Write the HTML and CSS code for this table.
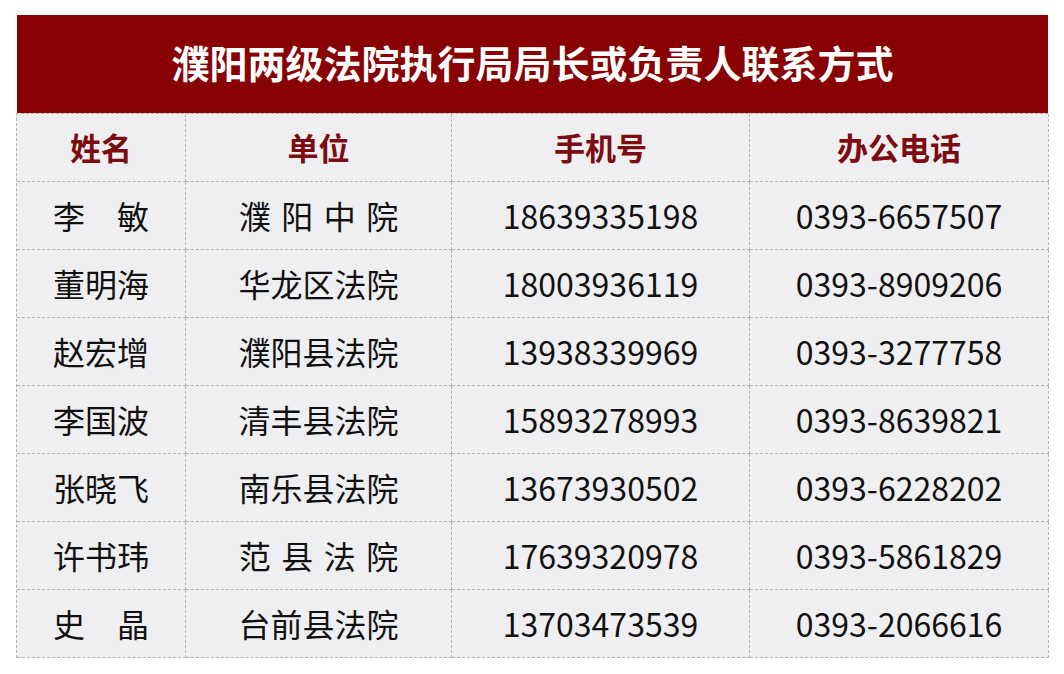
FILE: index.html
```html
<!DOCTYPE html>
<html lang="zh-CN">
<head>
<meta charset="utf-8">
<title>濮阳两级法院执行局局长或负责人联系方式</title>
<link rel="stylesheet" href="styles.css">
</head>
<body>
<div class="sheet">
  <div class="title">濮阳两级法院执行局局长或负责人联系方式</div>
  <div class="grid">
    <div class="cell head">姓名</div>
    <div class="cell head">单位</div>
    <div class="cell head">手机号</div>
    <div class="cell head">办公电话</div>

    <div class="cell">李　敏</div>
    <div class="cell"><span class="spread">濮阳中院</span></div>
    <div class="cell">18639335198</div>
    <div class="cell">0393-6657507</div>

    <div class="cell">董明海</div>
    <div class="cell">华龙区法院</div>
    <div class="cell">18003936119</div>
    <div class="cell">0393-8909206</div>

    <div class="cell">赵宏增</div>
    <div class="cell">濮阳县法院</div>
    <div class="cell">13938339969</div>
    <div class="cell">0393-3277758</div>

    <div class="cell">李国波</div>
    <div class="cell">清丰县法院</div>
    <div class="cell">15893278993</div>
    <div class="cell">0393-8639821</div>

    <div class="cell">张晓飞</div>
    <div class="cell">南乐县法院</div>
    <div class="cell">13673930502</div>
    <div class="cell">0393-6228202</div>

    <div class="cell">许书玮</div>
    <div class="cell"><span class="spread">范县法院</span></div>
    <div class="cell">17639320978</div>
    <div class="cell">0393-5861829</div>

    <div class="cell">史　晶</div>
    <div class="cell">台前县法院</div>
    <div class="cell">13703473539</div>
    <div class="cell">0393-2066616</div>
  </div>
</div>
</body>
</html>
```
FILE: styles.css
```css
html, body {
  margin: 0;
  padding: 0;
  background: #ffffff;
}
body {
  font-family: "Noto Sans CJK SC", "Noto Sans", sans-serif;
  color: #111111;
}
.sheet {
  margin: 15px 0 0 16px;
  width: 1032px;
}
.title {
  height: 98px;
  margin-left: 1px;
  background: #880204;
  color: #ffffff;
  font-weight: 700;
  font-size: 38px;
  line-height: 94px;
  text-align: center;
}
.grid {
  display: grid;
  grid-template-columns: 169px 266px 298px 299px;
  grid-auto-rows: 68px;
  border-left: 1px dashed #b3b3b3;
  border-top: 1px dashed #b3b3b3;
  background: #efeff1;
}
.cell {
  display: flex;
  align-items: center;
  justify-content: center;
  border-right: 1px dashed #b3b3b3;
  border-bottom: 1px dashed #b3b3b3;
  font-size: 32px;
  line-height: 1;
  padding-bottom: 2px;
}
.head {
  color: #7c0b12;
  font-weight: 700;
  font-size: 31px;
}
.spread {
  letter-spacing: 0.33em;
  margin-right: -0.33em;
}
```
